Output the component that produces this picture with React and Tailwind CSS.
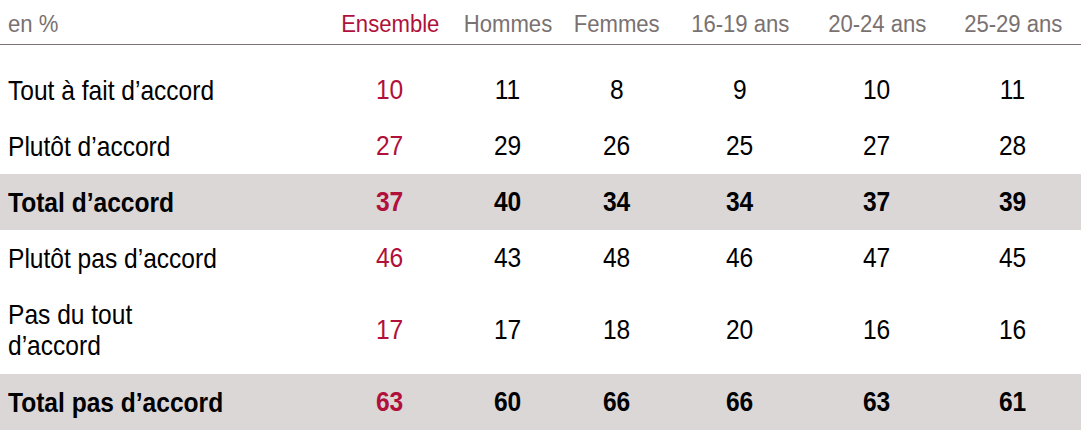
import React from "react";

const cols = ["Ensemble", "Hommes", "Femmes", "16-19 ans", "20-24 ans", "25-29 ans"];
const rows = [
  { label: "Tout à fait d’accord", v: [10, 11, 8, 9, 10, 11] },
  { label: "Plutôt d’accord", v: [27, 29, 26, 25, 27, 28] },
  { label: "Total d’accord", v: [37, 40, 34, 34, 37, 39], total: true },
  { label: "Plutôt pas d’accord", v: [46, 43, 48, 46, 47, 45] },
  { label: ["Pas du tout", "d’accord"], v: [17, 17, 18, 20, 16, 16], tall: true },
  { label: "Total pas d’accord", v: [63, 60, 66, 66, 63, 61], total: true },
];

const grid = "grid grid-cols-[331px_118px_118px_100px_146px_128px_140px]";

export default function App() {
  return (
    <div
      className="w-[1091px] h-[436px] bg-white text-black overflow-hidden"
      style={{ fontFamily: '"Liberation Sans Narrow", "Arial Narrow", "Liberation Sans", Arial, sans-serif' }}
    >
      <div className={`${grid} h-[45px] pt-[6px] items-center border-b border-[#7d7576] text-[23.5px] text-[#7a7171] w-[1081px]`}>
        <div className="pl-[8px]">
          <span className="inline-block scale-x-[0.94] origin-left">en %</span>
        </div>
        {cols.map((c, i) => (
          <div key={c} className={`text-center whitespace-nowrap ${i === 0 ? "text-[#b0103a]" : ""} ${i === 5 ? "pl-[4px]" : ""}`}>
            <span className="inline-block scale-x-[0.94] origin-center">{c}</span>
          </div>
        ))}
      </div>
      <div className="h-[17px]" />
      {rows.map((r, ri) => (
        <div
          key={ri}
          className={`${grid} w-[1081px] items-center text-[28px] ${r.tall ? "h-[88px]" : "h-[56px]"} ${r.total ? "bg-[#dbd7d7] font-bold" : ""}`}
        >
          <div className="pl-[8px] leading-[31px]">
            {Array.isArray(r.label) ? (
              r.label.map((l) => (
                <div key={l}>
                  <span className="inline-block scale-x-[0.877] origin-left whitespace-nowrap">{l}</span>
                </div>
              ))
            ) : (
              <span className="inline-block scale-x-[0.877] origin-left whitespace-nowrap">{r.label}</span>
            )}
          </div>
          {r.v.map((n, i) => (
            <div key={i} className={`text-center ${i === 0 ? "text-[#b0103a]" : ""} ${i === 5 ? "pl-[4px]" : ""}`}>
              <span className="inline-block scale-x-[0.877] origin-center">{n}</span>
            </div>
          ))}
        </div>
      ))}
    </div>
  );
}
